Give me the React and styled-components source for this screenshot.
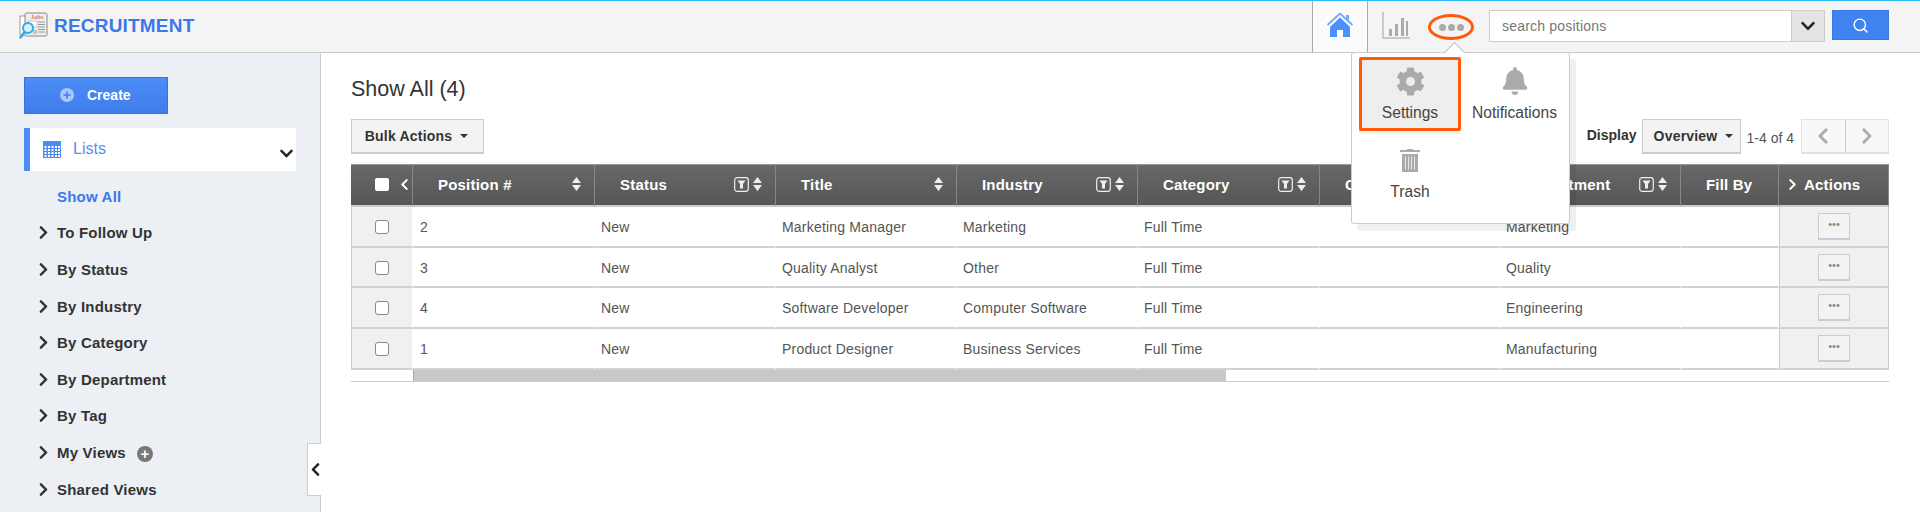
import React from "react"
import styled, { createGlobalStyle } from "styled-components"
import { FaChevronRight, FaChevronLeft, FaChevronDown, FaCog, FaBell } from "react-icons/fa"
import { Search } from "lucide-react"

const GlobalStyle = createGlobalStyle`
  html, body {
    margin: 0;
    padding: 0;
    height: 512px;
    overflow: hidden;
    background: #fff;
    font-family: "Liberation Sans", Arial, sans-serif;
  }
  * { box-sizing: border-box; }
`

const Page = styled.div`
  width: 1920px;
  height: 512px;
  overflow: hidden;
  display: flex;
  flex-direction: column;
  position: relative;
`

const Header = styled.header`
  height: 53px;
  flex: none;
  background: #f4f4f4;
  border-top: 1px solid #2dbcf5;
  border-bottom: 1px solid #c8c8c8;
  display: flex;
  align-items: flex-start;
  padding: 0 31px 0 19px;
  position: relative;
`

const Brand = styled.div`
  display: flex;
  align-items: center;
  gap: 6px;
  margin-top: 11px;
  color: #3c78e8;
  font-size: 19px;
  font-weight: 700;
  letter-spacing: 0.2px;
`

const HomeTab = styled.div`
  margin-left: auto;
  width: 56px;
  height: 51px;
  background: #fbfbfb;
  border-left: 1px solid #aaa;
  border-right: 1px solid #aaa;
  display: flex;
  justify-content: center;
  padding-top: 11px;
`

const ChartButton = styled.div`
  margin: 11px 0 0 14px;
`

const MoreButton = styled.div`
  width: 46px;
  height: 26px;
  margin: 13px 0 0 18px;
  border: 3px solid #ff5a0a;
  border-radius: 50%;
  display: flex;
  align-items: center;
  justify-content: center;
  gap: 2px;
`

const Dot = styled.span`
  width: 7px;
  height: 7px;
  border-radius: 50%;
  background: #aaa;
`

const SearchBox = styled.div`
  width: 336px;
  height: 32px;
  margin: 9px 0 0 15px;
  display: flex;
  background: #fff;
  border: 1px solid #ccc;
`

const SearchInput = styled.div`
  flex: 1;
  padding-left: 12px;
  line-height: 30px;
  font-size: 14px;
  letter-spacing: 0.2px;
  color: #777;
`

const SearchCaret = styled.div`
  width: 33px;
  background: #e4e4e4;
  border-left: 1px solid #ccc;
  display: flex;
  align-items: center;
  justify-content: center;
  color: #222;
  font-size: 16px;
`

const SearchButton = styled.div`
  width: 57px;
  height: 30px;
  margin: 9px 0 0 7px;
  background: #3f83f0;
  border: 1px solid #3a78dc;
  color: #fff;
  display: flex;
  align-items: center;
  justify-content: center;
`

const Popup = styled.div`
  position: absolute;
  top: 51px;
  left: 1351px;
  width: 219px;
  height: 172px;
  background: #fff;
  border: 1px solid #ccc;
  border-radius: 3px;
  box-shadow: 6px 7px 0 rgba(0, 0, 0, 0.06);
  z-index: 10;
  padding: 4px 0 0 7px;
  display: grid;
  grid-template-columns: 102px 107px;
  grid-auto-rows: 74px;
  row-gap: 5px;
  &::before {
    content: "";
    position: absolute;
    top: -8px;
    left: 95px;
    width: 14px;
    height: 14px;
    background: #fff;
    border-top: 1px solid #bbb;
    border-left: 1px solid #bbb;
    transform: rotate(45deg);
  }
`

const Tile = styled.div`
  display: flex;
  flex-direction: column;
  align-items: center;
  height: 74px;
  padding-top: 7px;
  border: 3px solid ${p => (p.$active ? "#ff5a0a" : "transparent")};
  background: ${p => (p.$active ? "#eeeeee" : "transparent")};
  border-radius: 2px;
  box-shadow: ${p => (p.$active ? "0 3px 0 #f0f0f0" : "none")};
  color: #aaa;
  position: relative;
`

const TileIcon = styled.div`
  height: 28px;
  display: flex;
  align-items: center;
  justify-content: center;
`

const TileLabel = styled.div`
  margin-top: 9px;
  font-size: 15.6px;
  line-height: 18px;
  color: #444;
  white-space: nowrap;
`

const Body = styled.div`
  flex: 1;
  display: flex;
  min-height: 0;
`

const Sidebar = styled.aside`
  width: 321px;
  flex: none;
  background: #eceff4;
  border-right: 1px solid #ccc;
  padding: 24px 0 0 24px;
  position: relative;
`

const CreateButton = styled.div`
  width: 144px;
  height: 37px;
  background: linear-gradient(#4c8cf6, #3f7eea);
  border: 1px solid #3a72d8;
  color: #fff;
  font-size: 14px;
  font-weight: 700;
  display: flex;
  align-items: center;
  padding: 0 0 2px 35px;
  gap: 13px;
`

const ListsRow = styled.div`
  width: 272px;
  height: 43px;
  margin-top: 14px;
  background: #fff;
  border-left: 6px solid #4d8cf5;
  position: relative;
  display: flex;
  align-items: flex-start;
  padding: 13px 0 0 13px;
  gap: 12px;
  color: #5b8fee;
  font-size: 16px;
  line-height: 15px;
`

const ListsCaret = styled.div`
  position: absolute;
  right: 2px;
  top: 18px;
  color: #222;
  font-size: 15px;
  line-height: 15px;
`

const NavList = styled.nav`
  margin-top: 7px;
`

const NavItem = styled.div`
  height: 36.6px;
  display: flex;
  align-items: center;
  padding-left: ${p => (p.$current ? "33px" : "12px")};
  gap: 6px;
  font-size: 15px;
  font-weight: 700;
  letter-spacing: 0.2px;
  color: ${p => (p.$current ? "#3c78e8" : "#333")};
  svg { flex: none; }
`

const PlusBadge = styled.span`
  width: 16px;
  height: 16px;
  margin: 4px 0 0 5px;
  border-radius: 50%;
  background: #777;
  color: #fff;
  font-size: 15px;
  line-height: 15px;
  text-align: center;
`

const CollapseHandle = styled.div`
  position: absolute;
  top: 390px;
  right: -1px;
  width: 14px;
  height: 53px;
  background: #fff;
  border: 1px solid #ccc;
  border-right: none;
  display: flex;
  align-items: center;
  padding-left: 2px;
  color: #222;
  font-size: 15px;
`

const Main = styled.main`
  flex: 1;
  min-width: 0;
  padding: 24px 31px 0 30px;
`

const Title = styled.h1`
  margin: 0;
  font-size: 21.5px;
  font-weight: 400;
  line-height: 24px;
  color: #333;
`

const Toolbar = styled.div`
  margin-top: 18px;
  display: flex;
  align-items: flex-start;
  justify-content: space-between;
`

const DropButton = styled.div`
  height: 35px;
  width: ${p => p.$width};
  padding: 0 ${p => p.$right || "0"} 0 ${p => p.$left || "0"};
  background: #f3f3f3;
  border: 1px solid #ccc;
  border-bottom-width: 2px;
  display: flex;
  align-items: center;
  justify-content: center;
  gap: 8px;
  font-size: 14px;
  font-weight: 700;
  letter-spacing: 0.2px;
  color: #333;
  &::after {
    content: "";
    border-top: 4px solid #333;
    border-left: 4px solid transparent;
    border-right: 4px solid transparent;
  }
`

const DisplayGroup = styled.div`
  display: flex;
  align-items: flex-start;
`

const DisplayLabel = styled.span`
  font-size: 14px;
  font-weight: 700;
  color: #333;
  margin: 8px 5px 0 0;
`

const PageCount = styled.span`
  font-size: 14px;
  color: #555;
  margin: 11px 7px 0 6px;
  white-space: nowrap;
`

const Pager = styled.div`
  display: flex;
  width: 88px;
  height: 35px;
  background: #f8f8f8;
  border: 1px solid #e2e2e2;
  border-bottom-width: 2px;
  color: #aaa;
  font-size: 18px;
`

const PagerCell = styled.div`
  flex: 1;
  display: flex;
  align-items: center;
  justify-content: center;
  & + & { border-left: 1px solid #ccc; }
`

const Table = styled.table`
  margin-top: 10px;
  width: 1538px;
  table-layout: fixed;
  border-collapse: separate;
  border-spacing: 0;
`

const HeadCell = styled.th`
  height: 43px;
  padding: 0;
  background: linear-gradient(#686868, #565656);
  border-top: 1px solid #999;
  border-right: 1px solid #888;
  border-bottom: 2px solid #ccc;
  color: #fff;
  font-size: 15px;
  font-weight: 700;
  letter-spacing: 0.2px;
  text-align: left;
`

const HeadInner = styled.div`
  display: flex;
  align-items: center;
  padding: 0 13px 2px ${p => p.$pad || "25px"};
  white-space: nowrap;
`

const CheckHeadInner = styled.div`
  display: flex;
  align-items: center;
  padding: 0 0 2px 24px;
  gap: 9px;
`

const HeadIcons = styled.div`
  margin-left: auto;
  display: flex;
  align-items: center;
  gap: 4px;
`

const HeadCheck = styled.span`
  flex: none;
  width: 14px;
  height: 13px;
  background: #fff;
  border-radius: 2px;
`

const Cell = styled.td`
  height: 40.7px;
  padding: ${p => (p.$first ? "1px 0 0 7px" : "1px 0 0 6px")};
  border-bottom: 2px solid #d2d2d2;
  border-right: 1px solid #fff;
  font-size: 14px;
  letter-spacing: 0.2px;
  color: #555;
  white-space: nowrap;
`

const CheckCell = styled(Cell)`
  padding: 0;
  background: #f0f0f0;
  border-left: 1px solid #ccc;
  border-right: 1px solid #fff;
  text-align: center;
`

const Check = styled.span`
  display: inline-block;
  width: 14px;
  height: 14px;
  margin-top: 4px;
  background: #fff;
  border: 1px solid #888;
  border-radius: 3px;
`

const ActionCell = styled(Cell)`
  padding: 0;
  background: #f0f0f0;
  border-left: 1px solid #ccc;
  border-right: 1px solid #ccc;
  text-align: center;
`

const RowMenu = styled.div`
  width: 32px;
  height: 27px;
  margin: 0 auto;
  background: #f3f3f3;
  border: 1px solid #ccc;
  border-bottom-width: 2px;
  color: #888;
  font-size: 11px;
  line-height: 20px;
  letter-spacing: 0;
`

const ScrollRow = styled.div`
  width: 1538px;
  height: 12px;
  border-bottom: 1px solid #ccc;
  padding: 0 110px 0 62px;
`

const ScrollThumb = styled.div`
  width: 813px;
  height: 11px;
  background: #c8c8c8;
  border-left: 1px solid #aaa;
`

const Calendar = () => (
  <svg width="18" height="17" viewBox="0 0 18 17">
    <rect width="18" height="17" fill="#4d8cf5" />
    {[5, 8, 11, 14].map(y => [1.5, 5, 8.5, 12, 15].map(x => (
      <rect key={`${x}-${y}`} x={x} y={y} width="2" height="2" fill="#fff" />
    )))}
  </svg>
)

const Logo = () => (
  <svg width="29" height="27" viewBox="0 0 29 27" style={{ flex: "none" }}>
    <rect x="1" y="4" width="9" height="19" fill="#fff" stroke="#999" />
    <rect x="6" y="1" width="22" height="23" rx="1.5" fill="#eee" stroke="#888" />
    <text x="12" y="7" fontSize="6" fill="#d9705f" fontFamily="Liberation Serif, serif">Jobs</text>
    <rect x="9" y="9" width="9" height="6" fill="#fff" stroke="#aaa" strokeWidth="0.6" />
    <path d="M19 10h7M19 12.5h7M19 15h7M19 17.5h7M19 20h7M14 19h4M14 21h4" stroke="#999" strokeWidth="1" />
    <circle cx="9" cy="16" r="5" fill="#d8effa" stroke="#2dade8" strokeWidth="2" />
    <path d="M5.5 20L1.5 25.5" stroke="#2dade8" strokeWidth="2.5" strokeLinecap="round" />
  </svg>
)

const Home = () => (
  <svg width="28" height="26" viewBox="0 0 28 26">
    <path d="M1.5 13L14 1.5 26.5 13" fill="none" stroke="#7aaaf8" strokeWidth="2" />
    <path d="M20 3h3v5h-3z" fill="#7aaaf8" />
    <path d="M14 5.5L24 15v10h-7v-7h-6v7H4V15z" fill="#4d8fff" />
  </svg>
)

const Chart = () => (
  <svg width="28" height="27" viewBox="0 0 28 27">
    <path d="M1 0v26h27" fill="none" stroke="#bbb" strokeWidth="1.5" />
    <path d="M7 17h3v7H7zM13 12h3v12h-3zM19 6h3v18h-3zM24 9h2v15h-2z" fill="#aaa" />
  </svg>
)

const Trash = () => (
  <svg width="20" height="25" viewBox="0 0 20 25">
    <path d="M7 2V1h6v1h7v2H0V2z" fill="#aaa" />
    <path d="M2 6h16v18H2z" fill="#aaa" />
    <path d="M5.5 8.5v13M8.5 8.5v13M11.500 8.5v13M14.500 8.5v13" stroke="#e8e8e8" strokeWidth="1" />
  </svg>
)

const FilterIcon = () => (
  <svg width="15" height="15" viewBox="0 0 15 15">
    <rect x="0.7" y="0.7" width="13.6" height="13.6" rx="2.5" fill="none" stroke="#eee" strokeWidth="1.2" />
    <path d="M3.500 3.500h8L9 7v4.500H6V7z" fill="#eee" />
  </svg>
)

const SortIcon = () => (
  <svg width="9" height="14" viewBox="0 0 9 14">
    <path d="M4.500 0L9 6H0zM0 8h9l-4.500 6z" fill="#eee" />
  </svg>
)

const rows = [
  ["2", "New", "Marketing Manager", "Marketing", "Full Time", "", "Marketing"],
  ["3", "New", "Quality Analyst", "Other", "Full Time", "", "Quality"],
  ["4", "New", "Software Developer", "Computer Software", "Full Time", "", "Engineering"],
  ["1", "New", "Product Designer", "Business Services", "Full Time", "", "Manufacturing"],
]

const columns = [
  { name: "Position #", width: 182 },
  { name: "Status", width: 181, filter: true },
  { name: "Title", width: 181 },
  { name: "Industry", width: 181, filter: true },
  { name: "Category", width: 182, filter: true },
  { name: "Contact", width: 180 },
  { name: "Department", width: 181, filter: true },
  { name: "Fill By", width: 98 },
]

const views = ["To Follow Up", "By Status", "By Industry", "By Category", "By Department", "By Tag", "My Views", "Shared Views"]

const App = () => (
  <Page>
    <GlobalStyle />
    <Header>
      <Brand>
        <Logo />
        RECRUITMENT
      </Brand>
      <HomeTab>
        <Home />
      </HomeTab>
      <ChartButton>
        <Chart />
      </ChartButton>
      <MoreButton>
        <Dot />
        <Dot />
        <Dot />
      </MoreButton>
      <SearchBox>
        <SearchInput>search positions</SearchInput>
        <SearchCaret>
          <FaChevronDown />
        </SearchCaret>
      </SearchBox>
      <SearchButton>
        <Search size={17} strokeWidth={2} />
      </SearchButton>
      <Popup>
        <Tile $active>
          <TileIcon>
            <FaCog size={29} />
          </TileIcon>
          <TileLabel>Settings</TileLabel>
        </Tile>
        <Tile>
          <TileIcon>
            <FaBell size={28} />
          </TileIcon>
          <TileLabel>Notifications</TileLabel>
        </Tile>
        <Tile>
          <TileIcon>
            <Trash />
          </TileIcon>
          <TileLabel>Trash</TileLabel>
        </Tile>
      </Popup>
    </Header>
    <Body>
      <Sidebar>
        <CreateButton>
          <svg width="14" height="14" viewBox="0 0 14 14">
            <circle cx="7" cy="7" r="7" fill="#a9c8fa" />
            <path d="M7 3.500v7M3.500 7h7" stroke="#4c8cf6" strokeWidth="2" />
          </svg>
          Create
        </CreateButton>
        <ListsRow>
          <Calendar />
          Lists
          <ListsCaret>
            <FaChevronDown />
          </ListsCaret>
        </ListsRow>
        <NavList>
          <NavItem $current>Show All</NavItem>
          {views.map(view => (
            <NavItem key={view}>
              <FaChevronRight size={15} />
              {view}
              {view === "My Views" && <PlusBadge>+</PlusBadge>}
            </NavItem>
          ))}
        </NavList>
        <CollapseHandle>
          <FaChevronLeft />
        </CollapseHandle>
      </Sidebar>
      <Main>
        <Title>Show All (4)</Title>
        <Toolbar>
          <DropButton $width="133px" $right="2px">Bulk Actions</DropButton>
          <DisplayGroup>
            <DisplayLabel>Display</DisplayLabel>
            <DropButton $width="99px" $left="5px">Overview</DropButton>
            <PageCount>1-4 of 4</PageCount>
            <Pager>
              <PagerCell>
                <FaChevronLeft />
              </PagerCell>
              <PagerCell>
                <FaChevronRight />
              </PagerCell>
            </Pager>
          </DisplayGroup>
        </Toolbar>
        <Table>
          <colgroup>
            <col style={{ width: 62 }} />
            {columns.map(col => (
              <col key={col.name} style={{ width: col.width }} />
            ))}
            <col style={{ width: 110 }} />
          </colgroup>
          <thead>
            <tr>
              <HeadCell>
                <CheckHeadInner>
                  <HeadCheck />
                  <FaChevronLeft size={13} />
                </CheckHeadInner>
              </HeadCell>
              {columns.map(col => (
                <HeadCell key={col.name}>
                  <HeadInner>
                    {col.name}
                    {col.name !== "Fill By" && col.name !== "Contact" && (
                      <HeadIcons>
                        {col.filter && <FilterIcon />}
                        <SortIcon />
                      </HeadIcons>
                    )}
                  </HeadInner>
                </HeadCell>
              ))}
              <HeadCell>
                <HeadInner $pad="7px">
                  <FaChevronRight size={13} style={{ marginRight: 5 }} />
                  Actions
                </HeadInner>
              </HeadCell>
            </tr>
          </thead>
          <tbody>
            {rows.map(row => (
              <tr key={row[0]}>
                <CheckCell>
                  <Check />
                </CheckCell>
                {row.map((value, i) => (
                  <Cell key={i} $first={i === 0}>{value}</Cell>
                ))}
                <Cell />
                <ActionCell>
                  <RowMenu>•••</RowMenu>
                </ActionCell>
              </tr>
            ))}
          </tbody>
        </Table>
        <ScrollRow>
          <ScrollThumb />
        </ScrollRow>
      </Main>
    </Body>
  </Page>
)

export default App
